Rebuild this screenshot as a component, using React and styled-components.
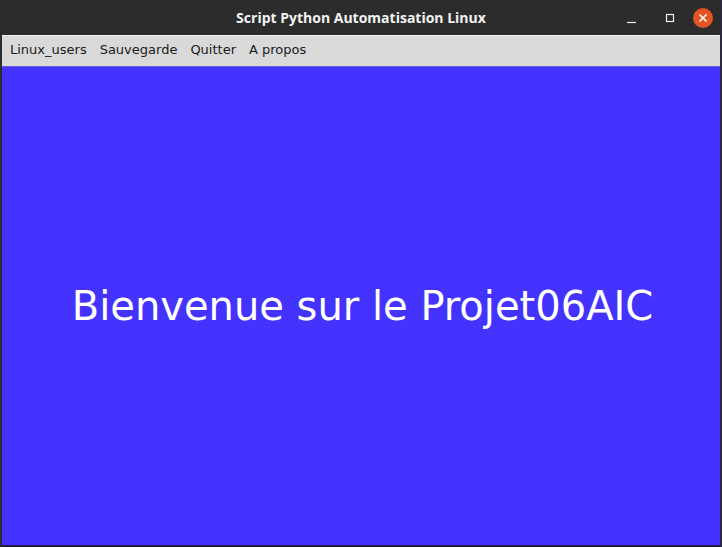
import React from "react";
import styled, { createGlobalStyle } from "styled-components";

const Global = createGlobalStyle`
  html, body {
    margin: 0;
    padding: 0;
    background: #1e1a4a;
  }
`;

const Window = styled.div`
  width: 722px;
  height: 547px;
  display: flex;
  flex-direction: column;
  box-sizing: border-box;
  background: #2c2c2c;
  border-left: 2px solid #2c2c2c;
  border-right: 2px solid #2a2a3a;
  border-bottom: 2px solid #1f1b4d;
  overflow: hidden;
`;

const TitleBar = styled.div`
  height: 35px;
  flex-shrink: 0;
  position: relative;
  display: flex;
  align-items: center;
  justify-content: center;
  background: #2c2c2c;
  color: #f2f2f2;
  font-family: "Open Sans", "DejaVu Sans", sans-serif;
  font-weight: 700;
  font-size: 14px;
`;

const Controls = styled.div`
  position: absolute;
  right: 7px;
  top: 0;
  height: 35px;
  display: flex;
  align-items: center;
`;

const Ctl = styled.div`
  width: 20px;
  height: 20px;
  margin-left: ${(p) => p.gap || 0}px;
  display: flex;
  align-items: center;
  justify-content: center;
  border-radius: 50%;
  background: ${(p) => (p.close ? "#e25424" : "transparent")};
`;

const MenuBar = styled.div`
  height: 31px;
  flex-shrink: 0;
  display: flex;
  align-items: center;
  gap: 13px;
  padding-left: 8px;
  padding-bottom: 3px;
  box-sizing: border-box;
  background: #d9d9d9;
  border-top: 1px solid #f4f4f4;
  font-family: "DejaVu Sans", sans-serif;
  font-size: 13px;
  color: #1a1a1a;
`;

const MenuItem = styled.span`
  cursor: default;
`;

const Main = styled.div`
  flex: 1;
  display: flex;
  align-items: center;
  justify-content: center;
  background: #4433ff;
  border-top: 1px solid #6a5fd0;
  color: #ffffff;
  font-family: "DejaVu Sans", sans-serif;
  font-size: 40px;
  padding-left: 3px;
`;

export default function App() {
  return (
    <>
      <Global />
      <Window>
        <TitleBar>
          Script Python Automatisation Linux
          <Controls>
            <Ctl>
              <svg width="12" height="12" viewBox="0 0 12 12">
                <path d="M1 10.5h9" stroke="#eee" strokeWidth="1.2" />
              </svg>
            </Ctl>
            <Ctl gap={18}>
              <svg width="12" height="12" viewBox="0 0 12 12">
                <rect x="2.5" y="2.5" width="7" height="7" fill="none" stroke="#eee" strokeWidth="1.2" />
              </svg>
            </Ctl>
            <Ctl close gap={13}>
              <svg width="12" height="12" viewBox="0 0 12 12">
                <path d="M2.5 2.5l7 7M9.5 2.5l-7 7" stroke="#fff" strokeWidth="1.6" />
              </svg>
            </Ctl>
          </Controls>
        </TitleBar>
        <MenuBar>
          <MenuItem>Linux_users</MenuItem>
          <MenuItem>Sauvegarde</MenuItem>
          <MenuItem>Quitter</MenuItem>
          <MenuItem>A propos</MenuItem>
        </MenuBar>
        <Main>Bienvenue sur le Projet06AIC</Main>
      </Window>
    </>
  );
}
